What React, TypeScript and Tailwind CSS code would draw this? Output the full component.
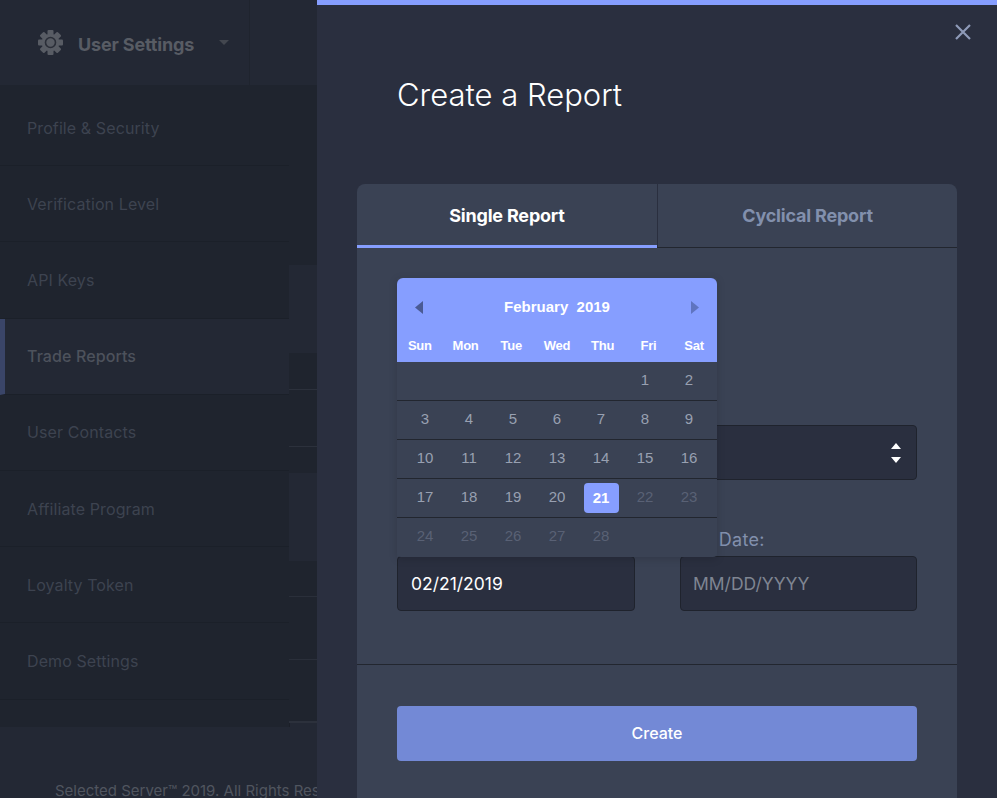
const MENU = ["Profile & Security", "Verification Level", "API Keys", "Trade Reports", "User Contacts", "Affiliate Program", "Loyalty Token", "Demo Settings"];
const DAY_NAMES = ["Sun", "Mon", "Tue", "Wed", "Thu", "Fri", "Sat"];
const WEEKS: (number | null)[][] = [
  [null, null, null, null, null, 1, 2],
  [3, 4, 5, 6, 7, 8, 9],
  [10, 11, 12, 13, 14, 15, 16],
  [17, 18, 19, 20, 21, 22, 23],
  [24, 25, 26, 27, 28, null, null],
];

function GearIcon() {
  return (
    <svg width="25" height="25" viewBox="0 0 25 25" className="mb-[1px] shrink-0">
      {[0, 45, 90, 135].map((a) => (
        <rect key={a} x="9.5" y="0" width="6" height="25" rx="1" fill="#585c64" transform={`rotate(${a} 12.5 12.5)`} />
      ))}
      <circle cx="12.5" cy="12.5" r="8.8" fill="#585c64" />
      <circle cx="12.5" cy="12.5" r="5" fill="none" stroke="#2a2e38" strokeWidth="1.6" />
    </svg>
  );
}

function Sidebar() {
  return (
    <div className="flex h-[642px] w-[289px] flex-col bg-[#1f242e] pt-[5px] shadow-[1px_0_0_#1b1f28]">
      {MENU.map((m) => {
        const active = m === "Trade Reports";
        return (
          <div
            key={m}
            className={`flex h-[76.2px] shrink-0 items-center border-b border-[#1b2029] pl-[27px] text-[16px] tracking-[0.1px] ${
              active ? "border-l-[5px] border-l-[#3a4568] bg-[#232834] !pl-[22px] font-medium text-[#4d525c]" : "text-[#3d4350]"
            }`}
          >
            {m}
          </div>
        );
      })}
    </div>
  );
}

function PageStrip() {
  return (
    <div className="flex h-[642px] flex-1 flex-col">
      <div className="h-[180px] bg-[#1f242e]" />
      <div className="h-[88px] bg-[#232834]" />
      <div className="h-[37px] border-b border-[#2c313c] bg-[#1f242e]" />
      <div className="h-[57px] border-b border-[#2c313c] bg-[#1f242e]" />
      <div className="h-[26px] bg-[#1f242e]" />
      <div className="h-[88px] bg-[#232834]" />
      <div className="h-[36px] border-b border-[#2a2f3a] bg-[#1f242e]" />
      <div className="h-[63px] border-b border-[#2a2f3a] bg-[#1f242e]" />
      <div className="h-[63px] border-b-2 border-[#2c313c] bg-[#1f242e]" />
    </div>
  );
}

function BackgroundPage() {
  return (
    <div className="flex h-full w-[317px] shrink-0 flex-col overflow-hidden bg-[#232834]">
      <div className="flex h-[85px] shrink-0">
        <div className="flex h-full w-[250px] items-center border-r border-[#1f242e] pl-[38px]">
          <GearIcon />
          <span className="ml-[15px] mt-[4px] text-[18px] font-bold tracking-[-0.15px] text-[#585c64]">User Settings</span>
          <span className="ml-[25px] mb-[1px] h-0 w-0 border-x-[5px] border-t-[5px] border-x-transparent border-t-[#43474f]" />
        </div>
      </div>
      <div className="flex">
        <Sidebar />
        <PageStrip />
      </div>
      <p className="mt-[53px] whitespace-nowrap pl-[55px] text-[15px] text-[#50555f]">Selected Server™ 2019. All Rights Reserved</p>
    </div>
  );
}

function Calendar() {
  return (
    <div className="absolute left-[40px] top-[30px] z-10 w-[320px] font-['Liberation_Sans',sans-serif] shadow-[0_2px_8px_rgba(0,0,0,0.15)]">
      <div className="h-[84px] rounded-t-[6px] bg-[#869eff] text-white">
        <div className="flex h-[58px] items-center justify-between pl-[18px] pr-[18px]">
          <svg width="8" height="13" viewBox="0 0 8 13"><path d="M8 0v13L0 6.5z" fill="#4a5a94" /></svg>
          <span className="text-[15px] font-bold whitespace-pre">February  2019</span>
          <svg width="8" height="13" viewBox="0 0 8 13"><path d="M0 0v13l8-6.5z" fill="#5f74c0" /></svg>
        </div>
        <div className="grid grid-cols-7 text-[13px] font-bold tracking-[-0.2px]">
          {DAY_NAMES.map((d) => (
            <span key={d} className="text-center">{d}</span>
          ))}
        </div>
      </div>
      <div className="rounded-b-[4px] bg-[#3a4254]">
        {WEEKS.map((week, w) => (
          <div key={w} className={`flex h-[39px] items-center px-[6px] ${w < 4 ? "border-b border-[#22262f]" : ""}`}>
            {week.map((d, i) => {
              const sel = d === 21;
              const off = d !== null && d > 21;
              return (
                <div key={i} className="flex h-[30px] w-[44px] items-center justify-center">
                  {d !== null && (
                    <span
                      className={`flex h-[30px] w-[35px] items-center justify-center rounded-[4px] text-[15px] ${
                        sel ? "bg-[#869eff] font-bold text-white" : off ? "pb-[2px] text-[#596175]" : "pb-[2px] text-[#98a0b1]"
                      }`}
                    >
                      {d}
                    </span>
                  )}
                </div>
              );
            })}
          </div>
        ))}
      </div>
    </div>
  );
}

function Field({ value, placeholder }: { value?: string; placeholder?: string }) {
  return (
    <div className={`flex h-[55px] w-full items-center rounded-[4px] border border-[#1f232d] bg-[#2a2f3f] pt-[2px] text-[17.5px] ${value ? "px-[13px] text-white" : "px-[12px] text-[#7f8592]"}`}>
      {value ?? placeholder}
    </div>
  );
}

function ReportCard() {
  return (
    <div className="mx-[40px] rounded-t-[8px] bg-[#3a4254]">
      <div className="flex h-[64px] border-b border-[#22262f]">
        <div className="relative flex w-[301px] items-center justify-center border-r border-[#2a2f3f] text-[18px] font-bold tracking-[-0.2px] text-white">
          Single Report
          <span className="absolute -bottom-px left-0 h-[3px] w-[300px] bg-[#869eff]" />
        </div>
        <div className="flex flex-1 items-center justify-center text-[18px] font-bold tracking-[-0.2px] text-[#8290ad]">Cyclical Report</div>
      </div>
      <div className="relative h-[417px] border-b border-[#22262f] px-[40px]">
        <Calendar />
        <div className="pt-[177px]">
          <div className="flex h-[55px] items-center justify-end rounded-[4px] border border-[#1f232d] bg-[#2a2f3f] pr-[14px]">
            <svg width="12" height="20" viewBox="0 0 12 20">
              <path d="M6 0l5 6H1zM6 20l-5-6h10z" fill="#fff" />
            </svg>
          </div>
        </div>
        <div className="mt-[49px] flex justify-between">
          <div className="w-[238px]">
            <p className="mb-[5px] h-[22px] text-[18px] leading-[22px] tracking-[0.3px] text-[#8290ad]">Start Date:</p>
            <Field value="02/21/2019" />
          </div>
          <div className="w-[237px]">
            <p className="mb-[5px] h-[22px] text-[18px] leading-[22px] tracking-[0.3px] text-[#8290ad]">End Date:</p>
            <Field placeholder="MM/DD/YYYY" />
          </div>
        </div>
      </div>
      <div className="px-[40px] pt-[41px] pb-[40px]">
        <div className="flex h-[55px] items-center justify-center rounded-[4px] bg-[#7389d6] pb-[2px] text-[16px] font-medium text-white">Create</div>
      </div>
    </div>
  );
}

function Modal() {
  return (
    <div className="h-full flex-1 overflow-hidden border-t-[5px] border-[#869eff] bg-[#2a2f3f]">
      <div className="flex h-[179px] items-start justify-between pt-[70px] pl-[80px]">
        <h1 className="text-[31px] leading-[40px] font-light text-white">Create a Report</h1>
      </div>
      <ReportCard />
      <svg className="absolute right-[26px] top-[24px]" width="16" height="16" viewBox="0 0 16 16">
        <path d="M1 1l14 14M15 1L1 15" stroke="#8e9ab8" strokeWidth="2.2" fill="none" />
      </svg>
    </div>
  );
}

export default function App() {
  return (
    <div className="relative flex h-[798px] w-[997px] overflow-hidden font-['Inter',sans-serif]">
      <BackgroundPage />
      <Modal />
    </div>
  );
}
